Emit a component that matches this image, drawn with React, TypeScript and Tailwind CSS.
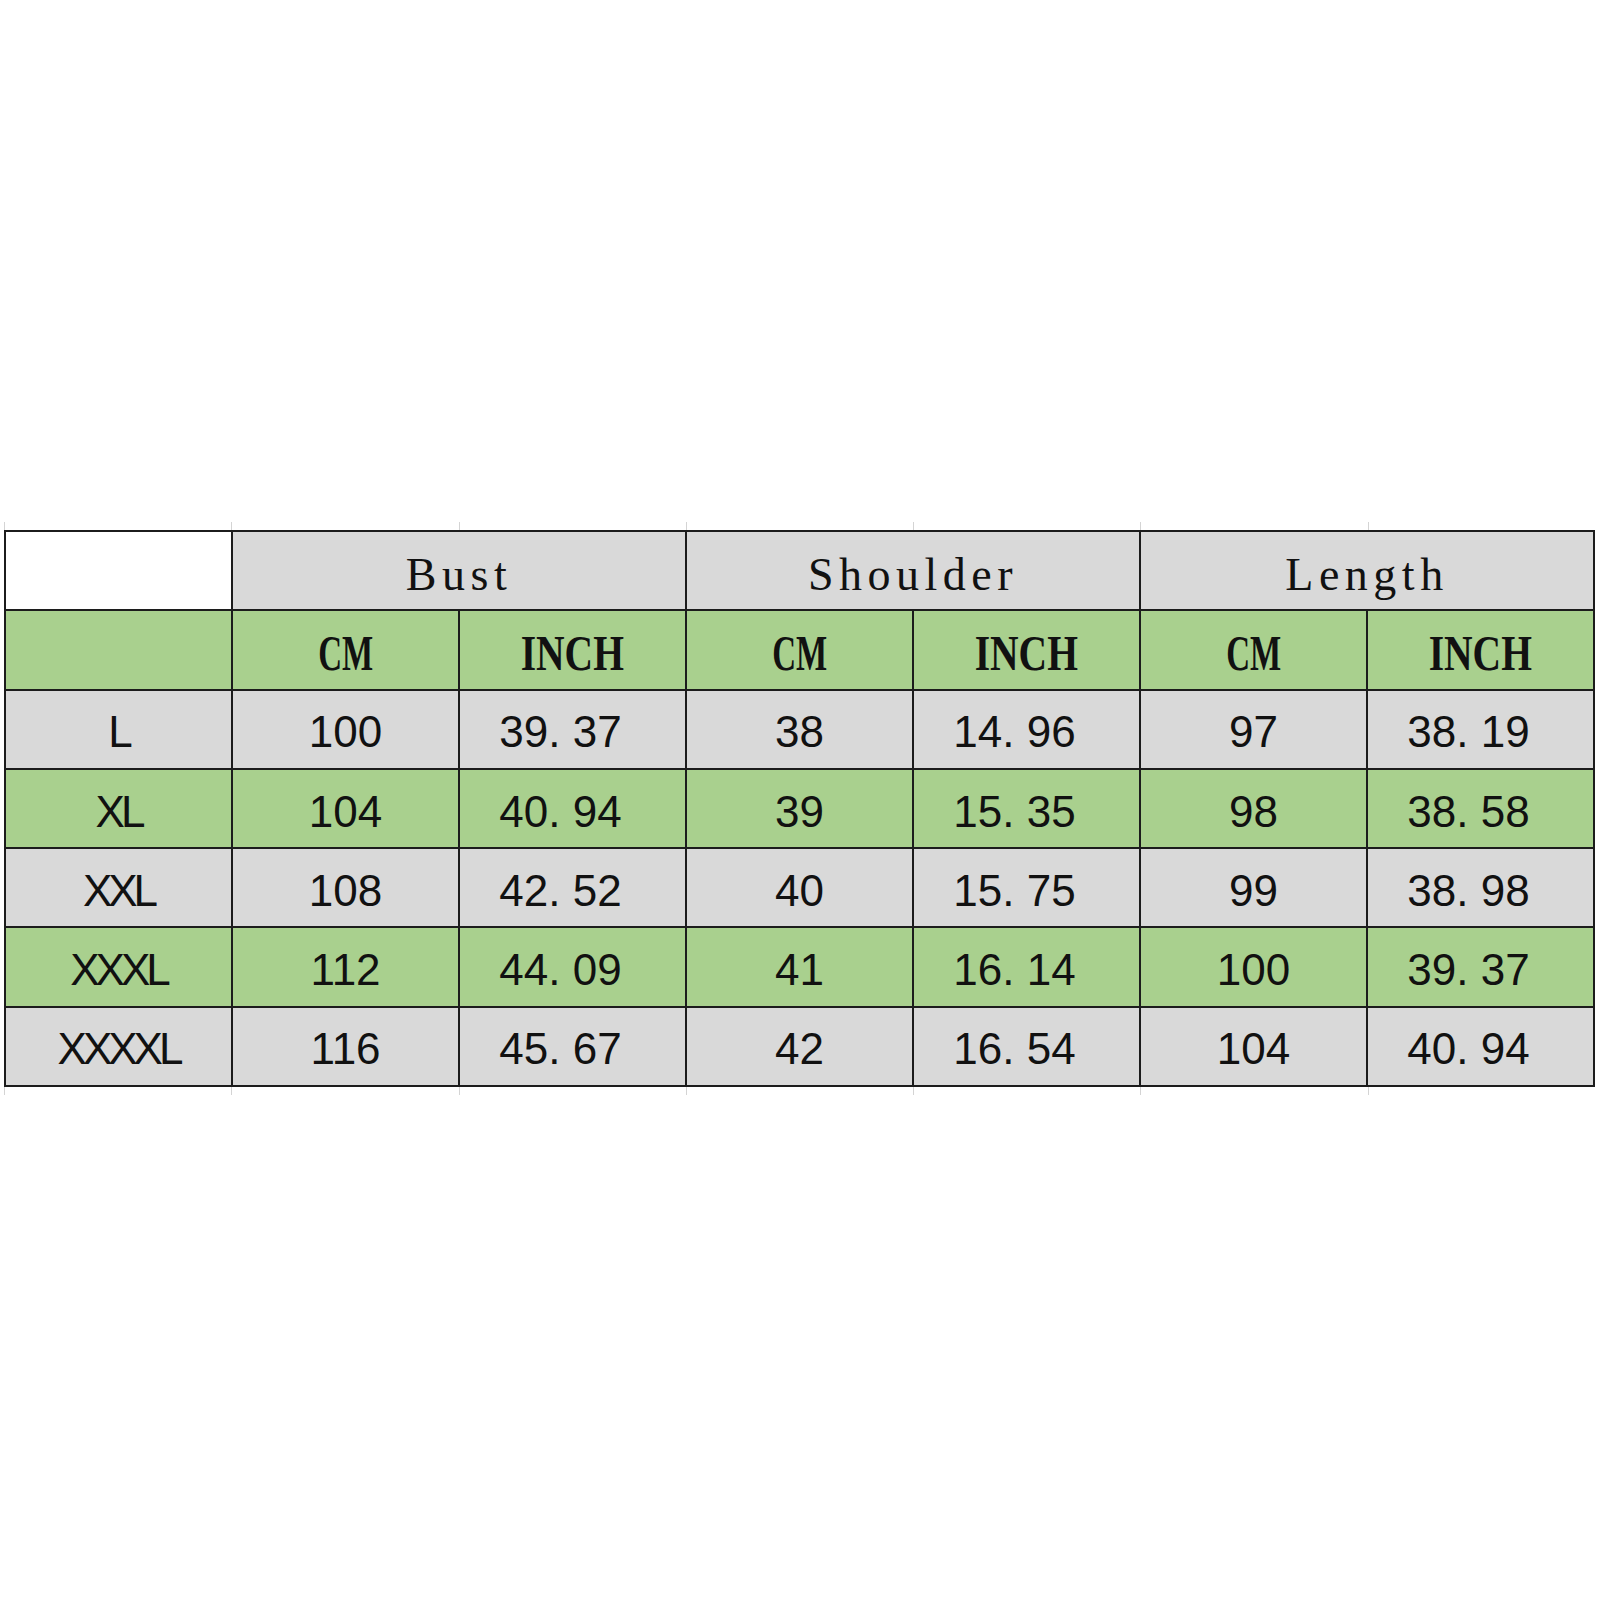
const rows = [
  { size: "L", v: ["100", "39. 37", "38", "14. 96", "97", "38. 19"] },
  { size: "XL", v: ["104", "40. 94", "39", "15. 35", "98", "38. 58"] },
  { size: "XXL", v: ["108", "42. 52", "40", "15. 75", "99", "38. 98"] },
  { size: "XXXL", v: ["112", "44. 09", "41", "16. 14", "100", "39. 37"] },
  { size: "XXXXL", v: ["116", "45. 67", "42", "16. 54", "104", "40. 94"] },
];

const serif = { fontFamily: '"Liberation Serif", "Times New Roman", serif' };
const sans = { fontFamily: '"Liberation Sans", Arial, sans-serif' };

const Ticks = () => (
  <div className="grid h-[8px] w-[1591px] grid-cols-7">
    {Array.from({ length: 7 }).map((_, i) => (
      <div key={i} className="border-l border-[#d4d4d4]" />
    ))}
  </div>
);

const Unit = ({ label }: { label: string }) => (
  <div className="flex h-[77.3px] items-center justify-center bg-[#a9d08e] pt-[6px]">
    <span
      className={`inline-block text-[50px] leading-none font-bold text-[#111] ${
        label === "CM" ? "scale-x-[0.66]" : "scale-x-[0.79]"
      }`}
      style={serif}
    >
      {label}
    </span>
  </div>
);

const App = () => {
  return (
    <div className="min-h-[1600px] w-[1600px] bg-white pt-[522px] pl-[4px]">
      <Ticks />
      <div className="grid w-[1591px] grid-cols-7 gap-[2px] bg-[#1c1c1c] p-[2px]">
        <div className="h-[77.3px] bg-white" />
        {["Bust", "Shoulder", "Length"].map((t) => (
          <div
            key={t}
            className="col-span-2 flex h-[77.3px] items-center justify-center bg-[#d9d9d9] pt-[8px]"
          >
            <span
              className="text-[46px] leading-none tracking-[5.5px] text-[#111]"
              style={serif}
            >
              {t}
            </span>
          </div>
        ))}

        <div className="h-[77.3px] bg-[#a9d08e]" />
        {["CM", "INCH", "CM", "INCH", "CM", "INCH"].map((u, i) => (
          <Unit key={i} label={u} />
        ))}

        {rows.map((r, ri) => {
          const bg = ri % 2 === 0 ? "bg-[#d9d9d9]" : "bg-[#a9d08e]";
          return [
            <div
              key={r.size}
              className={`flex h-[77.3px] items-center justify-center pt-[6px] ${bg}`}
            >
              <span
                className="text-[44px] leading-none tracking-[-4px] text-[#111]"
                style={sans}
              >
                {r.size}
              </span>
            </div>,
            ...r.v.map((val, ci) => (
              <div
                key={r.size + ci}
                className={`flex h-[77.3px] items-center justify-center pt-[6px] ${bg} ${
                  ci % 2 === 1 ? "pr-[24px]" : ""
                }`}
              >
                <span className="text-[44px] leading-none text-[#111]" style={sans}>
                  {val}
                </span>
              </div>
            )),
          ];
        })}
      </div>
      <Ticks />
    </div>
  );
};

export default App;
